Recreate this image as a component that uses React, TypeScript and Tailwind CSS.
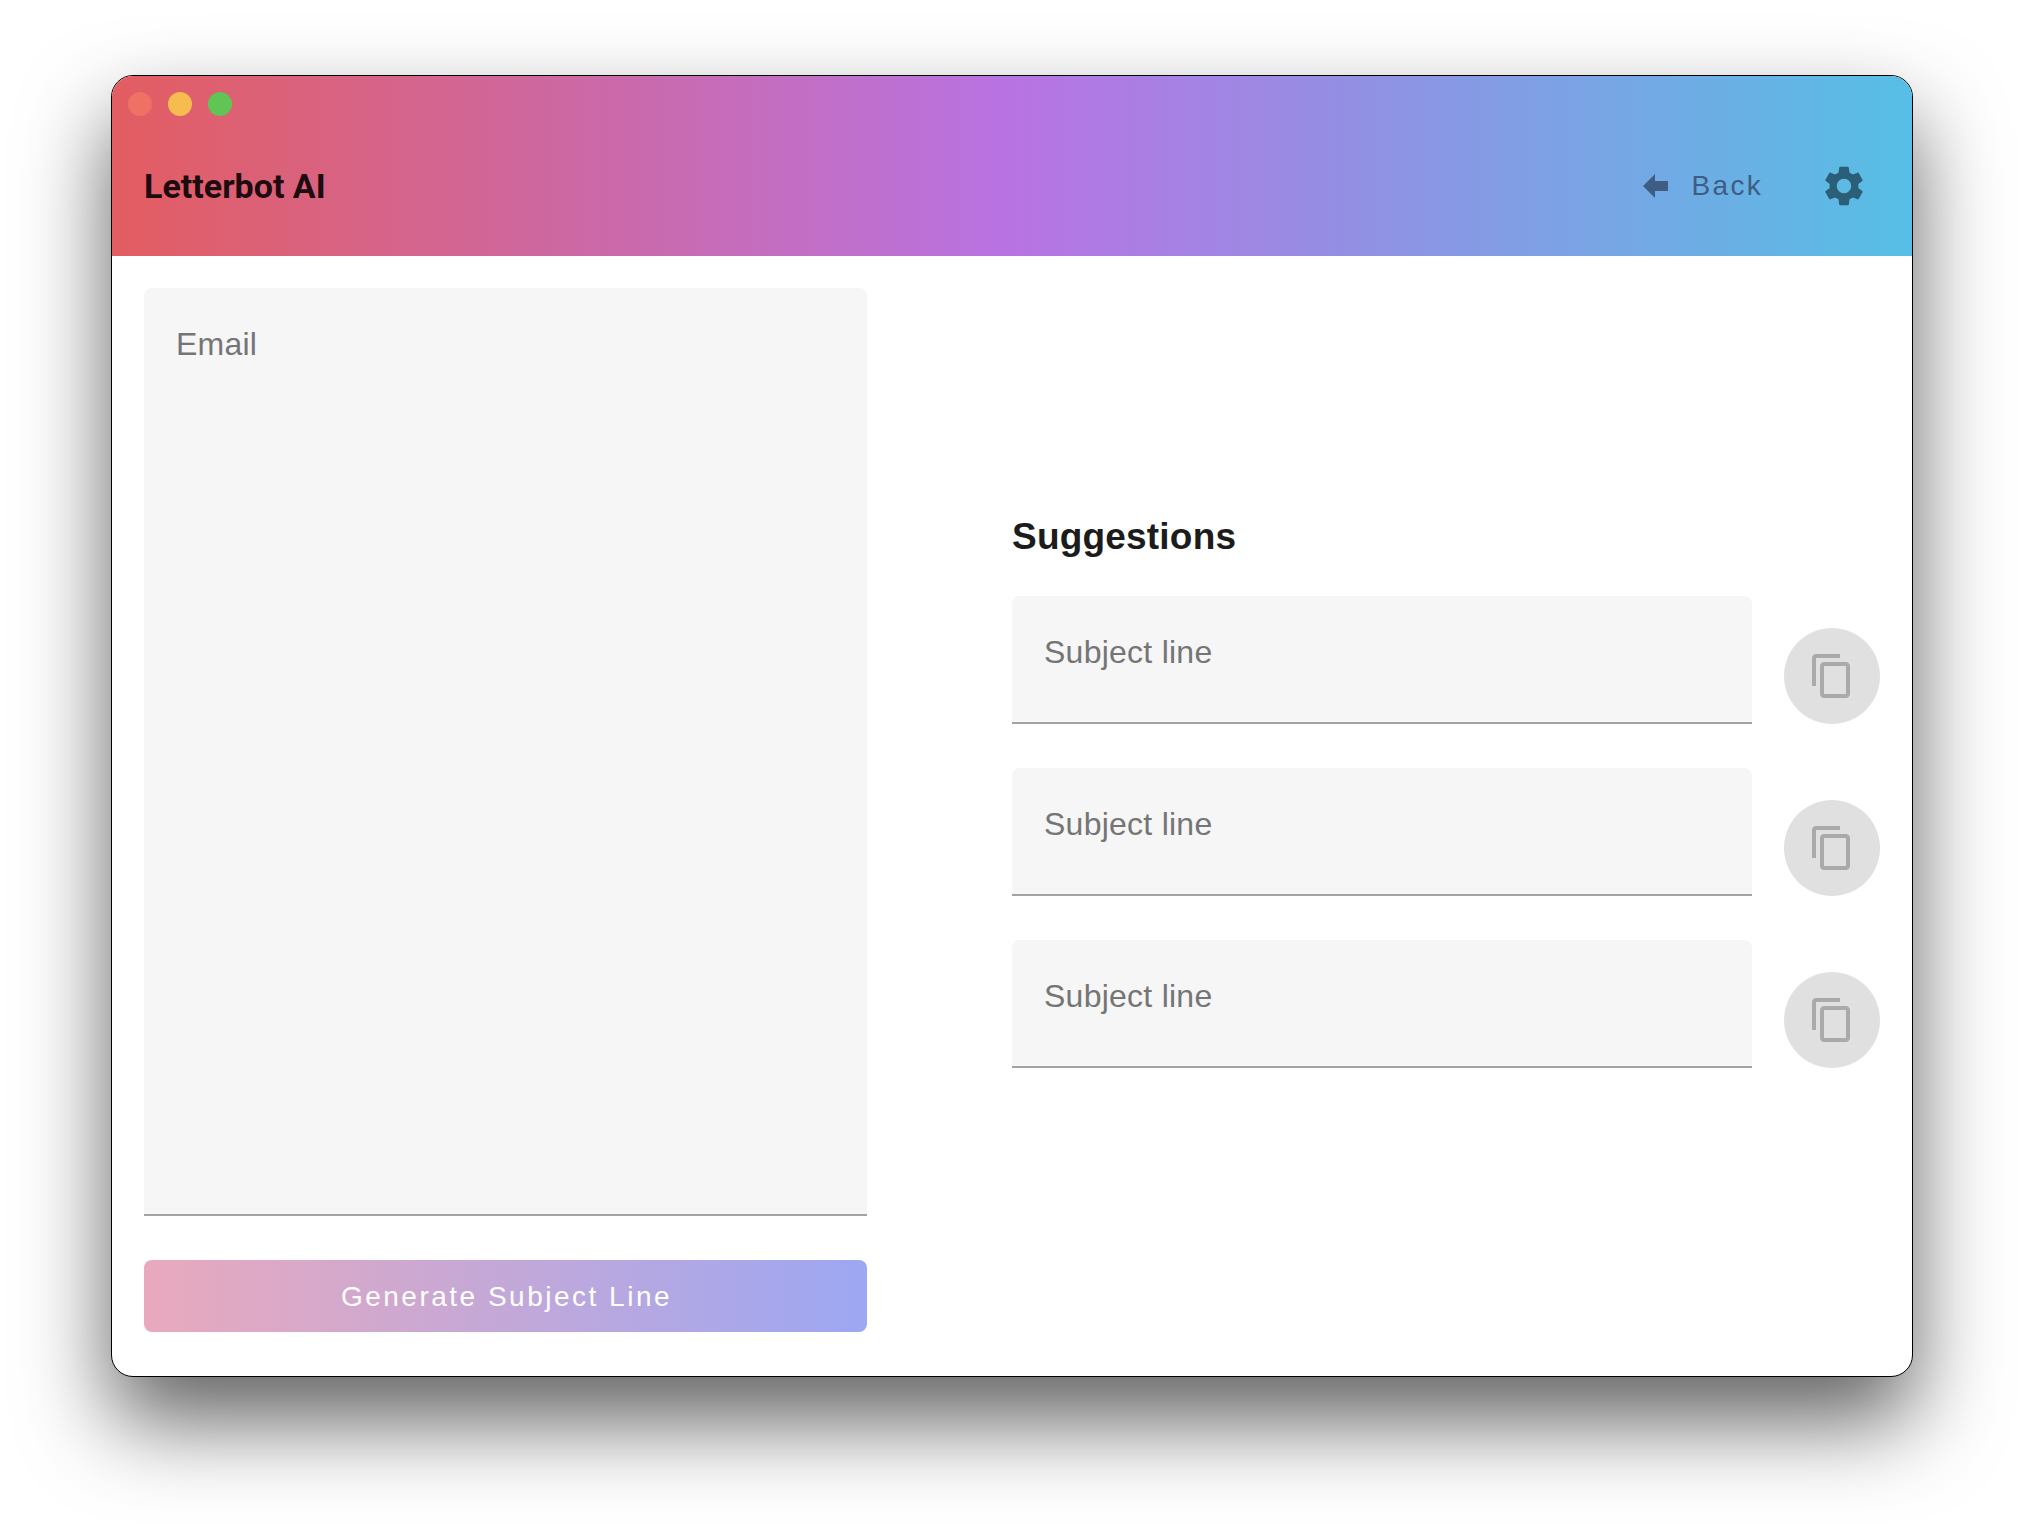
const FIELDS = ["one", "two", "three"];

function CopyIcon() {
  return (
    <svg viewBox="0 0 24 24" className="h-12 w-12 fill-[#aaaaaa]">
      <path d="M16 1H4c-1.1 0-2 .9-2 2v14h2V3h12V1zm3 4H8c-1.1 0-2 .9-2 2v14c0 1.1.9 2 2 2h11c1.1 0 2-.9 2-2V7c0-1.1-.9-2-2-2zm0 16H8V7h11v14z" />
    </svg>
  );
}

function BackArrow() {
  return (
    <svg viewBox="0 0 25 24" className="h-6 w-[25px] fill-[#3f5c83]">
      <path d="M0 12 12 0v7h13v10H12v7z" />
    </svg>
  );
}

function GearIcon() {
  return (
    <svg viewBox="0 0 24 24" className="h-12 w-12 fill-[#2b5f78]">
      <path d="M19.14 12.94c.04-.3.06-.61.06-.94 0-.32-.02-.64-.07-.94l2.03-1.58c.18-.14.23-.41.12-.61l-1.92-3.32c-.12-.22-.37-.29-.59-.22l-2.39.96c-.5-.38-1.03-.7-1.62-.94l-.36-2.54c-.04-.24-.24-.41-.48-.41h-3.84c-.24 0-.43.17-.47.41l-.36 2.54c-.59.24-1.13.57-1.62.94l-2.39-.96c-.22-.08-.47 0-.59.22L2.74 8.87c-.12.21-.08.47.12.61l2.03 1.58c-.05.3-.09.63-.09.94s.02.64.07.94l-2.03 1.58c-.18.14-.23.41-.12.61l1.92 3.32c.12.22.37.29.59.22l2.39-.96c.5.38 1.03.7 1.62.94l.36 2.54c.05.24.24.41.48.41h3.84c.24 0 .44-.17.47-.41l.36-2.54c.59-.24 1.13-.56 1.62-.94l2.39.96c.22.08.47 0 .59-.22l1.92-3.32c.12-.22.07-.47-.12-.61l-2.01-1.58zM12 15.6c-1.98 0-3.6-1.62-3.6-3.6s1.62-3.6 3.6-3.6 3.6 1.62 3.6 3.6-1.62 3.6-3.6 3.6z" />
    </svg>
  );
}

function SubjectRow() {
  return (
    <div className="flex h-[128px] items-end">
      <div className="h-full w-[740px] rounded-t-lg border-b-2 border-[#a3a3a3] bg-[#f6f6f6] pl-8 pt-[36px] text-[32px] leading-[40px] tracking-[0.25px] text-[#757575]">
        Subject line
      </div>
      <button className="ml-8 flex h-24 w-24 items-center justify-center rounded-full bg-[#e0e0e0]">
        <CopyIcon />
      </button>
    </div>
  );
}

export default function App() {
  return (
    <div className="h-[1524px] w-[2024px] overflow-hidden bg-white pl-[111px] pt-[75px] font-['Liberation_Sans',sans-serif]">
      <div className="h-[1302px] w-[1802px] overflow-hidden rounded-[22px] border border-black bg-white shadow-[0_44px_88px_rgba(0,0,0,0.62)]">
        <header className="relative flex h-[180px] items-center bg-[linear-gradient(90deg,#e35d61_0%,#b873e3_50%,#56bfe5_100%)] pl-8 pr-11 pt-10">
          <div className="absolute left-4 top-4 flex gap-4">
            <span className="h-6 w-6 rounded-full bg-[#ef7064]" />
            <span className="h-6 w-6 rounded-full bg-[#f5bd4f]" />
            <span className="h-6 w-6 rounded-full bg-[#61c554]" />
          </div>
          <h1 className="font-['Roboto',sans-serif] text-[34px] font-bold leading-10 text-[#1d0b0f]">
            Letterbot AI
          </h1>
          <div className="flex-1" />
          <button className="flex items-center text-[#3f5c83]">
            <BackArrow />
            <span className="ml-6 text-[28px] leading-9 tracking-[2.3px]">Back</span>
          </button>
          <span className="ml-[57px] flex">
            <GearIcon />
          </span>
        </header>
        <main className="flex p-8">
          <section className="w-[723px]">
            <div className="h-[928px] rounded-t-lg border-b-2 border-[#a3a3a3] bg-[#f6f6f6] pl-8 pt-[36px] text-[32px] leading-[40px] tracking-[0.2px] text-[#757575]">
              Email
            </div>
            <button className="mt-[44px] h-[72px] w-full rounded-lg bg-[linear-gradient(90deg,#e9a9bd_0%,#9da7f3_100%)] pl-[2px] pt-px text-[28px] tracking-[2.5px] text-white">
              Generate Subject Line
            </button>
          </section>
          <section className="ml-[145px] pt-[227px]">
            <h2 className="h-[81px] text-[37px] font-bold leading-[44px] tracking-[0.2px] text-[#1c1c1c]">Suggestions</h2>
            <div className="flex flex-col gap-[44px]">
              {FIELDS.map((f) => (
                <SubjectRow key={f} />
              ))}
            </div>
          </section>
        </main>
      </div>
    </div>
  );
}
